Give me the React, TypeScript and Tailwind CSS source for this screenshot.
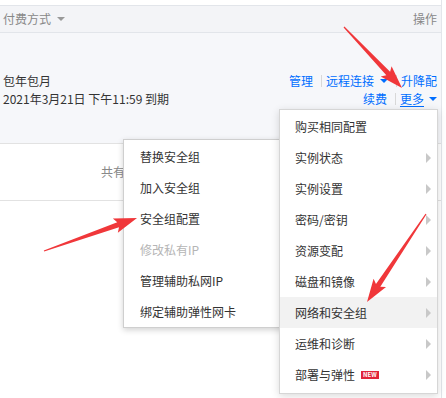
import React from "react";

function arrowPts(tx: number, ty: number, px: number, py: number, headLen = 20, headW = 7.5, shaftW = 2.6) {
  const dx = px - tx, dy = py - ty;
  const len = Math.hypot(dx, dy);
  const ux = dx / len, uy = dy / len;
  const nx = -uy, ny = ux;
  const bx = px - ux * headLen, by = py - uy * headLen;
  const wx = px - ux * (headLen + 3), wy = py - uy * (headLen + 3);
  const pts = [
    [tx + nx * 0.6, ty + ny * 0.6],
    [bx + nx * shaftW, by + ny * shaftW],
    [wx + nx * headW, wy + ny * headW],
    [px, py],
    [wx - nx * headW, wy - ny * headW],
    [bx - nx * shaftW, by - ny * shaftW],
    [tx - nx * 0.6, ty - ny * 0.6],
  ];
  return pts.map((p) => p.join(",")).join(" ");
}

const Caret = ({ color }: { color: string }) => (
  <span
    className="inline-block w-0 h-0 border-l-[4px] border-r-[4px] border-t-[4px] border-l-transparent border-r-transparent"
    style={{ borderTopColor: color }}
  />
);

const RightArrow = () => (
  <span className="inline-block w-0 h-0 border-t-[5px] border-b-[5px] border-l-[5px] border-t-transparent border-b-transparent border-l-[#c8c8c8]" />
);

const Sep = () => <span className="inline-block w-px h-[12px] bg-[#d8d8d8] ml-[8px] mr-[4px]" />;

export default function App() {
  const leftItems = [
    { t: "替换安全组" },
    { t: "加入安全组" },
    { t: "安全组配置" },
    { t: "修改私有IP", disabled: true },
    { t: "管理辅助私网IP" },
    { t: "绑定辅助弹性网卡" },
  ];
  const rightItems = [
    { t: "购买相同配置", sub: false },
    { t: "实例状态", sub: true },
    { t: "实例设置", sub: true },
    { t: "密码/密钥", sub: true },
    { t: "资源变配", sub: true },
    { t: "磁盘和镜像", sub: true },
    { t: "网络和安全组", sub: true, active: true },
    { t: "运维和诊断", sub: true },
    { t: "部署与弹性", sub: true, badge: true },
  ];
  return (
    <div
      className="relative w-[446px] h-[398px] overflow-hidden bg-white text-[12px] text-[#333]"
      style={{ fontFamily: '"Noto Sans CJK SC", "Noto Sans", sans-serif' }}
    >
      <div className="w-[442px] h-full border-r border-[#e3e6eb] pt-[5px]">
        {/* header */}
        <div className="h-[28px] bg-[#f3f4f7] border-y border-[#e2e5ea] flex items-center justify-between pl-[3px] pr-[4px] text-[#888] leading-[16px]">
          <span className="flex items-center gap-[6px]">
            付费方式 <Caret color="#999" />
          </span>
          <span>操作</span>
        </div>
        {/* row 1 */}
        <div className="h-[111px] bg-[#f6f7fa] border-b border-[#e2e2e2] flex items-center justify-between pl-[3px] pr-[4px] leading-[18px]">
          <div className="pt-[3px]">
            <div>包年包月</div>
            <div>2021年3月21日 下午11:59 到期</div>
          </div>
          <div className="flex flex-col items-end text-[#006eff] pt-[3px]">
            <div className="flex items-center">
              <span>管理</span>
              <Sep />
              <span>远程连接</span>
              <span className="ml-[6px] flex items-center"><Caret color="#006eff" /></span>
              <Sep />
              <span>升降配</span>
            </div>
            <div className="flex items-center">
              <span>续费</span>
              <Sep />
              <span className="underline underline-offset-2">更多</span>
              <span className="ml-[5px] flex items-center"><Caret color="#006eff" /></span>
            </div>
          </div>
        </div>
        {/* row 2 */}
        <div className="h-[57px] border-b border-[#e2e2e2] flex items-center pl-[101px] text-[#888] leading-[16px]">
          共有 1 条
        </div>
      </div>

      {/* left submenu */}
      <div className="absolute left-[123px] top-[139px] w-[170px] bg-white border border-[#cfcfcf] shadow-[0_2px_6px_rgba(0,0,0,0.18)] pt-[1px]">
        {leftItems.map((it) => (
          <div
            key={it.t}
            className={`h-[31px] flex items-center pl-[16px] leading-[16px] ${it.disabled ? "text-[#b5b5b5]" : "text-[#333]"}`}
          >
            {it.t}
          </div>
        ))}
      </div>

      {/* right menu */}
      <div className="absolute left-[279px] top-[109px] w-[159px] h-[285px] bg-white border border-[#d6d6d6] shadow-[0_2px_8px_rgba(0,0,0,0.15)] pt-[1px]">
        {rightItems.map((it) => (
          <div
            key={it.t}
            className={`h-[31px] flex items-center justify-between pl-[15px] pr-[6px] leading-[16px] ${it.active ? "bg-[#f2f2f2]" : ""}`}
          >
            <span className="flex items-center">
              {it.t}
              {it.badge && (
                <span className="ml-[6px] h-[8px] px-[2px] bg-[#e1253a] text-white text-[6px] leading-[8px] font-bold flex items-center">
                  NEW
                </span>
              )}
            </span>
            {it.sub && <RightArrow />}
          </div>
        ))}
      </div>

      {/* annotation arrows */}
      <svg className="absolute inset-0 pointer-events-none" width="446" height="398">
        <polygon points={arrowPts(344, 27, 402, 88)} fill="#f0373a" />
        <polygon points={arrowPts(44, 251, 137, 218)} fill="#f0373a" />
        <polygon points={arrowPts(426, 214, 367, 302)} fill="#f0373a" />
      </svg>
    </div>
  );
}
